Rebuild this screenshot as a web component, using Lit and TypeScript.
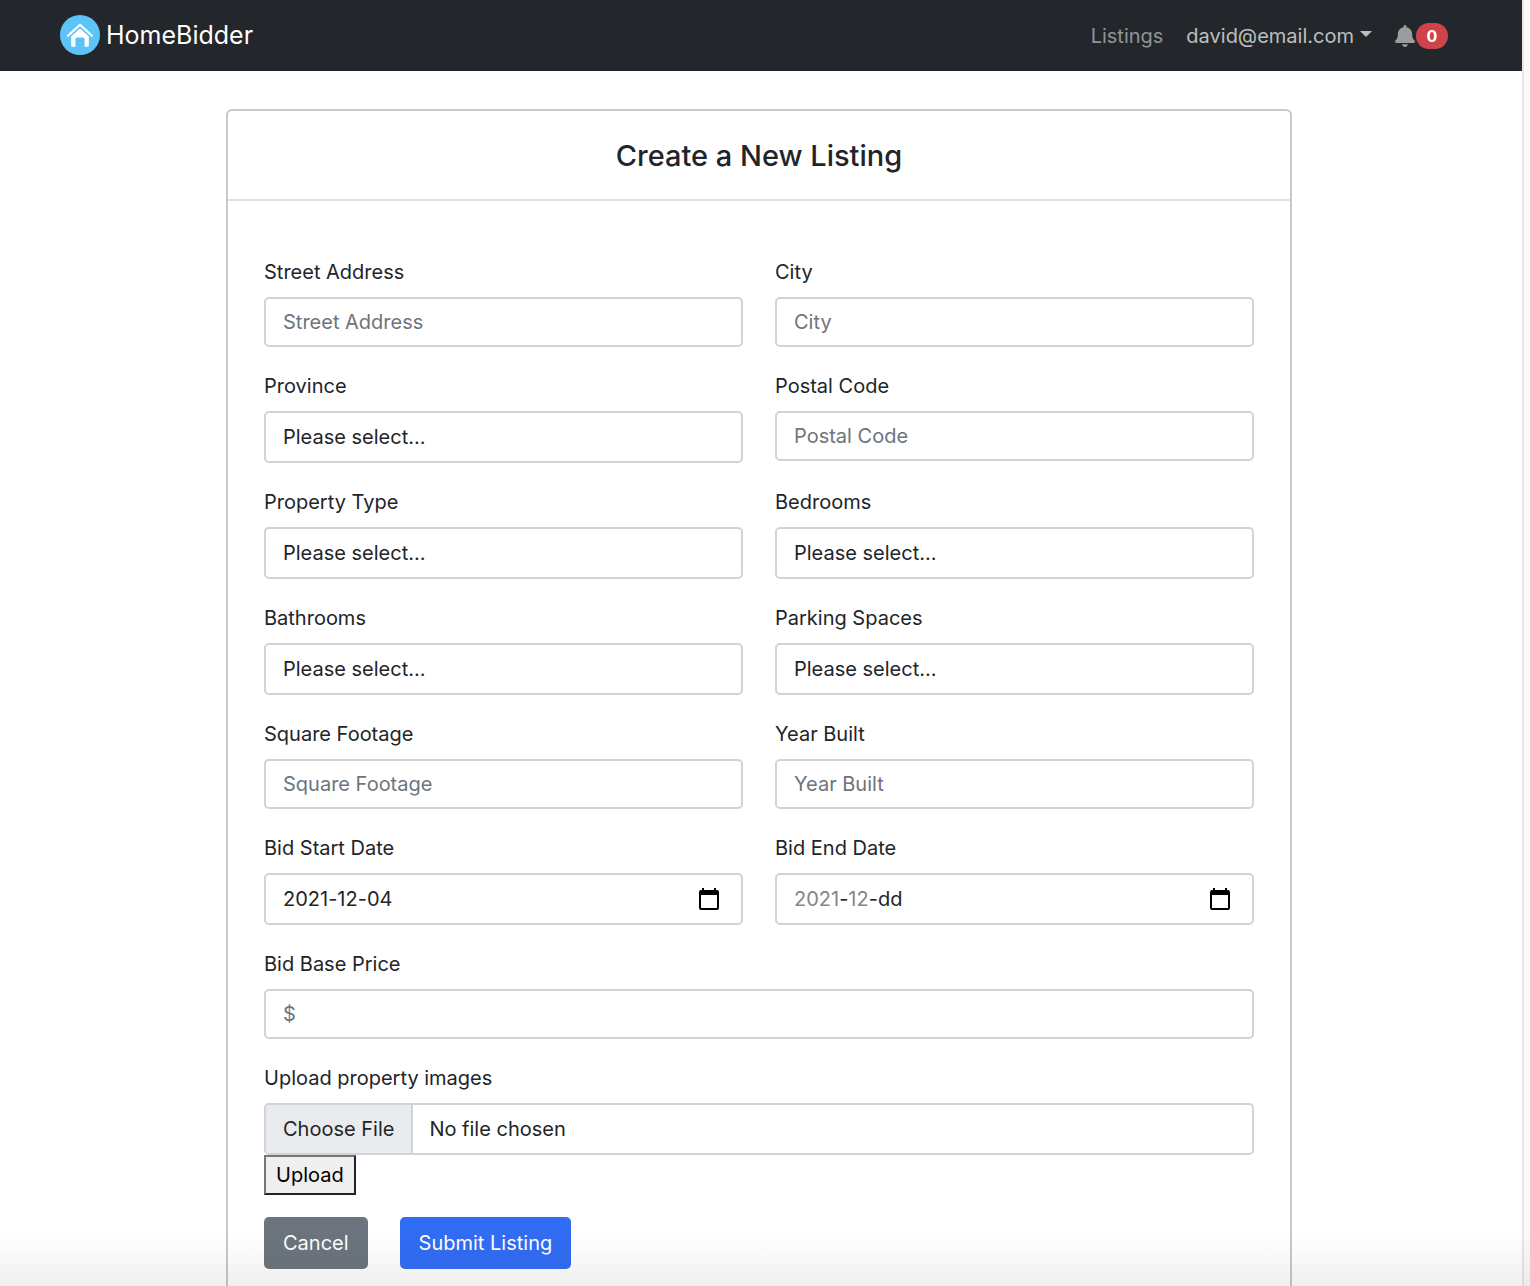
import { LitElement, html, css, svg, nothing } from "lit";
import { customElement } from "lit/decorators.js";
import { classMap } from "lit/directives/class-map.js";

type Kind = "text" | "select" | "date";

interface DatePart {
  name: string;
  value?: string;
  placeholder: string;
  muted?: boolean;
}

interface Field {
  id: string;
  label: string;
  kind: Kind;
  placeholder?: string;
  wide?: boolean;
  parts?: DatePart[];
}

const FIELDS: Field[] = [
  { id: "street", label: "Street Address", kind: "text", placeholder: "Street Address" },
  { id: "city", label: "City", kind: "text", placeholder: "City" },
  { id: "province", label: "Province", kind: "select" },
  { id: "postal", label: "Postal Code", kind: "text", placeholder: "Postal Code" },
  { id: "type", label: "Property Type", kind: "select" },
  { id: "bedrooms", label: "Bedrooms", kind: "select" },
  { id: "bathrooms", label: "Bathrooms", kind: "select" },
  { id: "parking", label: "Parking Spaces", kind: "select" },
  { id: "footage", label: "Square Footage", kind: "text", placeholder: "Square Footage" },
  { id: "year", label: "Year Built", kind: "text", placeholder: "Year Built" },
  {
    id: "start",
    label: "Bid Start Date",
    kind: "date",
    parts: [
      { name: "Year", value: "2021", placeholder: "yyyy" },
      { name: "Month", value: "12", placeholder: "mm" },
      { name: "Day", value: "04", placeholder: "dd" },
    ],
  },
  {
    id: "end",
    label: "Bid End Date",
    kind: "date",
    parts: [
      { name: "Year", value: "2021", placeholder: "yyyy", muted: true },
      { name: "Month", value: "12", placeholder: "mm", muted: true },
      { name: "Day", placeholder: "dd" },
    ],
  },
  { id: "price", label: "Bid Base Price", kind: "text", placeholder: "$", wide: true },
];

const logo = html`<svg class="logo" viewBox="0 0 40 40" aria-hidden="true">
  ${svg`
    <circle cx="20" cy="20" r="20" fill="#5bc5fa" />
    <path d="M8 20.800 20 9.800l12 11" fill="none" stroke="#fff" stroke-width="2.200" stroke-linecap="round" stroke-linejoin="round" />
    <path d="M20 13.400 28.800 21.200v9.600q0 1-1 1h-3.200v-7.200q0-2-2-2h-5.200q-2 0-2 2v7.200h-3.200q-1 0-1-1v-9.600z" fill="#fff" />
  `}
</svg>`;

const bell = html`<svg class="bell" viewBox="0 0 448 512" preserveAspectRatio="none" aria-hidden="true">
  ${svg`<path fill="currentColor" d="M224 512c35.300 0 64-28.700 64-64H160c0 35.300 28.700 64 64 64zm215.400-149.700c-19.300-20.800-55.500-52-55.500-154.300 0-77.700-54.500-139.900-127.900-155.200V32c0-17.700-14.300-32-32-32s-32 14.300-32 32v20.800C118.600 68.100 64.100 130.300 64.100 208c0 102.300-36.200 133.500-55.500 154.300-6 6.400-8.700 14.100-8.600 21.700.1 16.400 13 32 32.100 32h383.800c19.100 0 32-15.600 32.100-32 .1-7.600-2.600-15.300-8.600-21.700z" />`}
</svg>`;

const calendar = html`<svg class="calendar" viewBox="0 0 20 22" aria-hidden="true">
  ${svg`
    <path d="M3 0h2v3H3zM15 0h2v3h-2z" />
    <path fill-rule="evenodd" d="M2 2h16q2 0 2 2v16q0 2-2 2H2q-2 0-2-2V4q0-2 2-2zM2 7v13h16V7z" />
  `}
</svg>`;

@customElement("app-root")
export class AppRoot extends LitElement {
  static styles = css`
    :host {
      display: block;
      font-family: Inter, "Liberation Sans", sans-serif;
      font-size: 20px;
      line-height: 30px;
      color: #212529;
    }
    * {
      box-sizing: border-box;
    }
    input,
    select,
    button {
      font: inherit;
      color: inherit;
      margin: 0;
    }
    .shell {
      position: relative;
      display: grid;
      grid-template-columns: minmax(0, 1fr) 8px;
      height: 100vh;
      background: #fff;
    }
    .scroller {
      overflow-y: auto;
      scrollbar-width: none;
    }
    .track {
      background: #fafafa;
      border-left: 2px solid #e8e8e8;
    }
    .fade {
      position: absolute;
      inset: auto 0 0 0;
      height: 56px;
      background: linear-gradient(rgba(0, 0, 0, 0), rgba(0, 0, 0, 0.06));
      pointer-events: none;
    }
    .navbar {
      display: flex;
      align-items: center;
      justify-content: space-between;
      height: 71px;
      padding: 0 74px 0 60px;
      background: #23272b;
    }
    .brand {
      display: flex;
      align-items: center;
      gap: 6px;
      padding-bottom: 2px;
      color: #fff;
      font-size: 25px;
      text-decoration: none;
    }
    .logo {
      width: 40px;
      height: 40px;
    }
    .menu {
      display: flex;
      align-items: center;
      gap: 23px;
    }
    .link {
      color: #919395;
      text-decoration: none;
    }
    .account {
      display: flex;
      align-items: center;
      gap: 6px;
      padding: 0;
      border: 0;
      background: none;
      color: #bdbebf;
    }
    .caret {
      margin-bottom: 4px;
      border: 6px solid transparent;
      border-top-color: currentColor;
      border-bottom: 0;
    }
    .alerts {
      display: flex;
      align-items: center;
      gap: 1px;
      padding: 0;
      border: 0;
      background: none;
      color: #9a9c9d;
    }
    .bell {
      width: 20px;
      height: 22px;
    }
    .badge {
      width: 32px;
      border-radius: 13px;
      background: #cf444a;
      color: #fff;
      font-size: 16px;
      font-weight: 700;
      line-height: 26px;
      text-align: center;
    }
    .page {
      padding: 38px 20px 38px 16px;
    }
    .card {
      max-width: 1066px;
      margin: 0 auto;
      border: 2px solid #c8c9ca;
      border-radius: 6px;
    }
    .title {
      margin: 0;
      padding: 25px 24px 23px;
      border-bottom: 2px solid #dee2e6;
      font-size: 29px;
      font-weight: 500;
      line-height: 40px;
      text-align: center;
    }
    .form {
      padding: 54px 36px 36px;
    }
    .grid {
      display: grid;
      grid-template-columns: repeat(2, minmax(0, 1fr));
      gap: 22px 32px;
    }
    .wide {
      grid-column: 1 / -1;
    }
    .label {
      display: block;
      margin-bottom: 8px;
      line-height: 34px;
    }
    .control {
      display: block;
      width: 100%;
      height: 50px;
      padding: 0 17px;
      border: 2px solid #ced4da;
      border-radius: 5px;
      background: #fff;
      outline-color: #86b7fe;
    }
    .control::placeholder {
      color: #6c757d;
      opacity: 1;
    }
    .tall {
      height: 52px;
    }
    .select {
      appearance: none;
    }
    .date {
      display: flex;
      align-items: center;
      padding-right: 22px;
    }
    .part {
      field-sizing: content;
      padding: 0;
      border: 0;
      background: none;
      outline: 0;
    }
    .part::placeholder {
      color: inherit;
      opacity: 1;
    }
    .muted {
      color: #858585;
    }
    .picker {
      display: flex;
      margin-left: auto;
      padding: 0;
      border: 0;
      background: none;
      color: #000;
    }
    .calendar {
      width: 20px;
      height: 22px;
    }
    .file {
      padding: 0;
      line-height: 48px;
      overflow: hidden;
    }
    .file::file-selector-button {
      height: 48px;
      margin: 0 16px 0 0;
      padding: 0 17px;
      border: 0;
      border-right: 2px solid #ced4da;
      background: #e9ebef;
      color: inherit;
      font: inherit;
    }
    .upload {
      display: block;
      height: 40px;
      padding: 0 10px;
      border: 2px solid;
      border-color: #767676 #212529 #212529 #767676;
      background: #efefef;
      color: #000;
    }
    .actions {
      display: flex;
      gap: 32px;
      margin-top: 22px;
    }
    .btn {
      height: 52px;
      padding: 0 19px;
      border: 0;
      border-radius: 5px;
      color: #fff;
    }
    .cancel {
      background: #6c757d;
    }
    .submit {
      background: #316cf4;
    }
  `;

  private renderControl(f: Field) {
    if (f.kind === "select") {
      return html`<select class="control tall select" id=${f.id}>
        <option>Please select...</option>
      </select>`;
    }
    if (f.kind === "date") {
      return html`<div class="control tall date" role="group" aria-label=${f.label}>
        ${f.parts!.map(
          (p, i) => html`${i ? html`<span>-</span>` : nothing}<input
              class=${classMap({ part: true, muted: !!p.muted })}
              id=${i ? `${f.id}-${p.name}` : f.id}
              aria-label=${`${f.label} ${p.name}`}
              inputmode="numeric"
              .value=${p.value ?? ""}
              placeholder=${p.placeholder}
            />`
        )}
        <button class="picker" type="button" aria-label="Open calendar">${calendar}</button>
      </div>`;
    }
    return html`<input class="control" id=${f.id} type="text" placeholder=${f.placeholder ?? ""} />`;
  }

  render() {
    return html`
      <div class="shell">
        <div class="scroller">
          <nav class="navbar">
            <a class="brand" href="#">${logo}<span>HomeBidder</span></a>
            <div class="menu">
              <a class="link" href="#listings">Listings</a>
              <button class="account" type="button" aria-haspopup="menu">
                david@email.com<span class="caret"></span>
              </button>
              <button class="alerts" type="button" aria-label="Notifications">
                ${bell}<span class="badge">0</span>
              </button>
            </div>
          </nav>
          <main class="page">
            <section class="card">
              <h1 class="title">Create a New Listing</h1>
              <form class="form">
                <div class="grid">
                  ${FIELDS.map(
                    (f) => html`<div class=${classMap({ field: true, wide: !!f.wide })}>
                      <label class="label" for=${f.id}>${f.label}</label>
                      ${this.renderControl(f)}
                    </div>`
                  )}
                  <div class="wide">
                    <label class="label" for="images">Upload property images</label>
                    <input class="control tall file" id="images" type="file" />
                    <button class="upload" type="button">Upload</button>
                  </div>
                </div>
                <div class="actions">
                  <button class="btn cancel" type="button">Cancel</button>
                  <button class="btn submit" type="button">Submit Listing</button>
                </div>
              </form>
            </section>
          </main>
        </div>
        <div class="track"></div>
        <div class="fade"></div>
      </div>
    `;
  }
}
